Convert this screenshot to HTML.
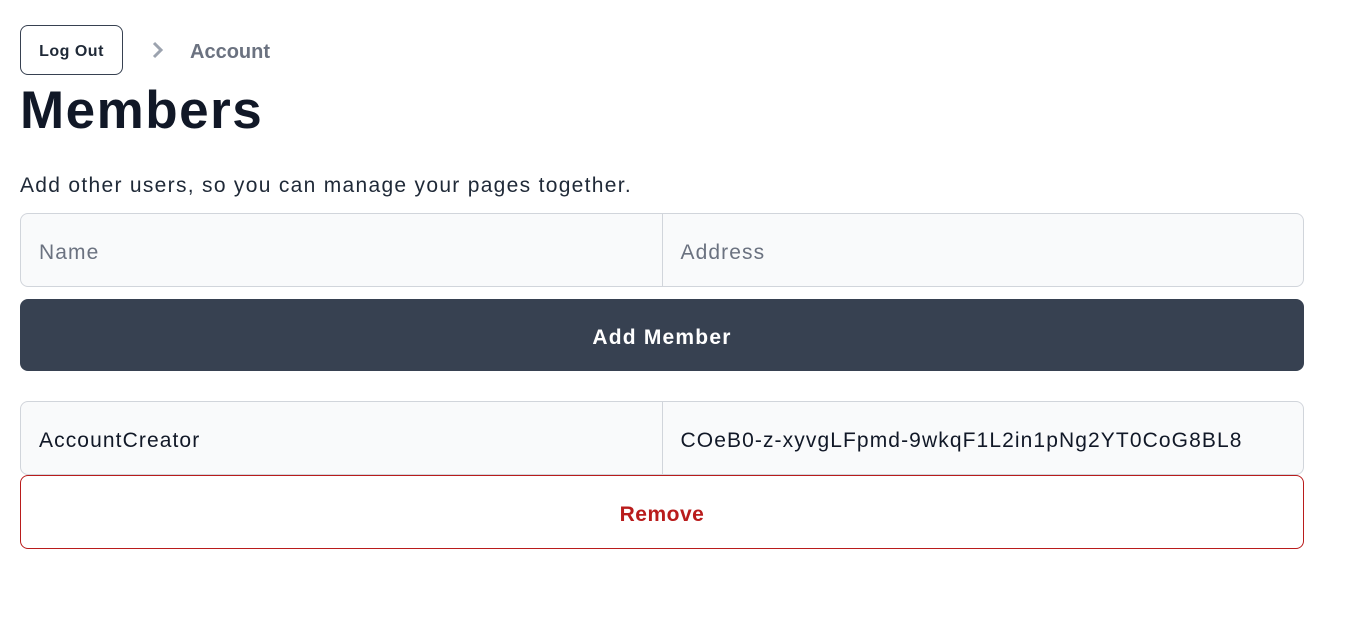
<!DOCTYPE html>
<html><head><style>
*{box-sizing:border-box;margin:0;padding:0}
body{width:1355px;height:631px;background:#fff;font-family:"Liberation Sans",sans-serif;color:#111827;position:relative;overflow:hidden}
.abs{position:absolute}
.logout{left:20px;top:25px;width:103px;height:50px;border:1px solid #374151;border-radius:8px;font-size:16px;font-weight:bold;color:#1f2937;display:flex;align-items:center;justify-content:center;padding-top:3px;letter-spacing:0.5px}
.crumb{left:190px;top:41px;font-size:20px;color:#6b7280;font-weight:bold}
h1{position:absolute;left:20px;top:80px;font-size:53px;font-weight:bold;color:#111827;letter-spacing:1.5px}
.desc{left:20px;top:174px;font-size:21px;color:#1f2937;letter-spacing:1.3px}
.row{left:20px;width:1284px;height:74px;border:1px solid #d1d5db;border-radius:8px;background:#f9fafb;display:flex}
.row div{flex:1;display:flex;align-items:center;padding-left:18px;font-size:21px;padding-top:5px;letter-spacing:1.1px}
.row div+div{border-left:1px solid #d1d5db}
.btn{left:20px;top:299px;width:1284px;height:72px;background:#374151;border-radius:8px;color:#fff;font-size:21px;font-weight:bold;display:flex;align-items:center;justify-content:center;padding-top:5px;letter-spacing:1.2px}
.rm{left:20px;top:475px;width:1284px;height:74px;border:1px solid #b91c1c;border-radius:8px;color:#b91c1c;font-size:21px;font-weight:bold;display:flex;align-items:center;justify-content:center;padding-top:5px;letter-spacing:0.5px}
</style></head><body>
<div class="abs logout">Log Out</div>
<svg class="abs" style="left:150px;top:40px" width="16" height="20" viewBox="0 0 16 20"><path d="M4 3l7 7-7 7" fill="none" stroke="#9ca3af" stroke-width="3"/></svg>
<div class="abs crumb">Account</div>
<h1>Members</h1>
<div class="abs desc">Add other users, so you can manage your pages together.</div>
<div class="abs row" style="top:213px"><div style="color:#6b7280">Name</div><div style="color:#6b7280">Address</div></div>
<div class="abs btn">Add Member</div>
<div class="abs row" style="top:401px"><div>AccountCreator</div><div>COeB0-z-xyvgLFpmd-9wkqF1L2in1pNg2YT0CoG8BL8</div></div>
<div class="abs rm">Remove</div>
</body></html>
